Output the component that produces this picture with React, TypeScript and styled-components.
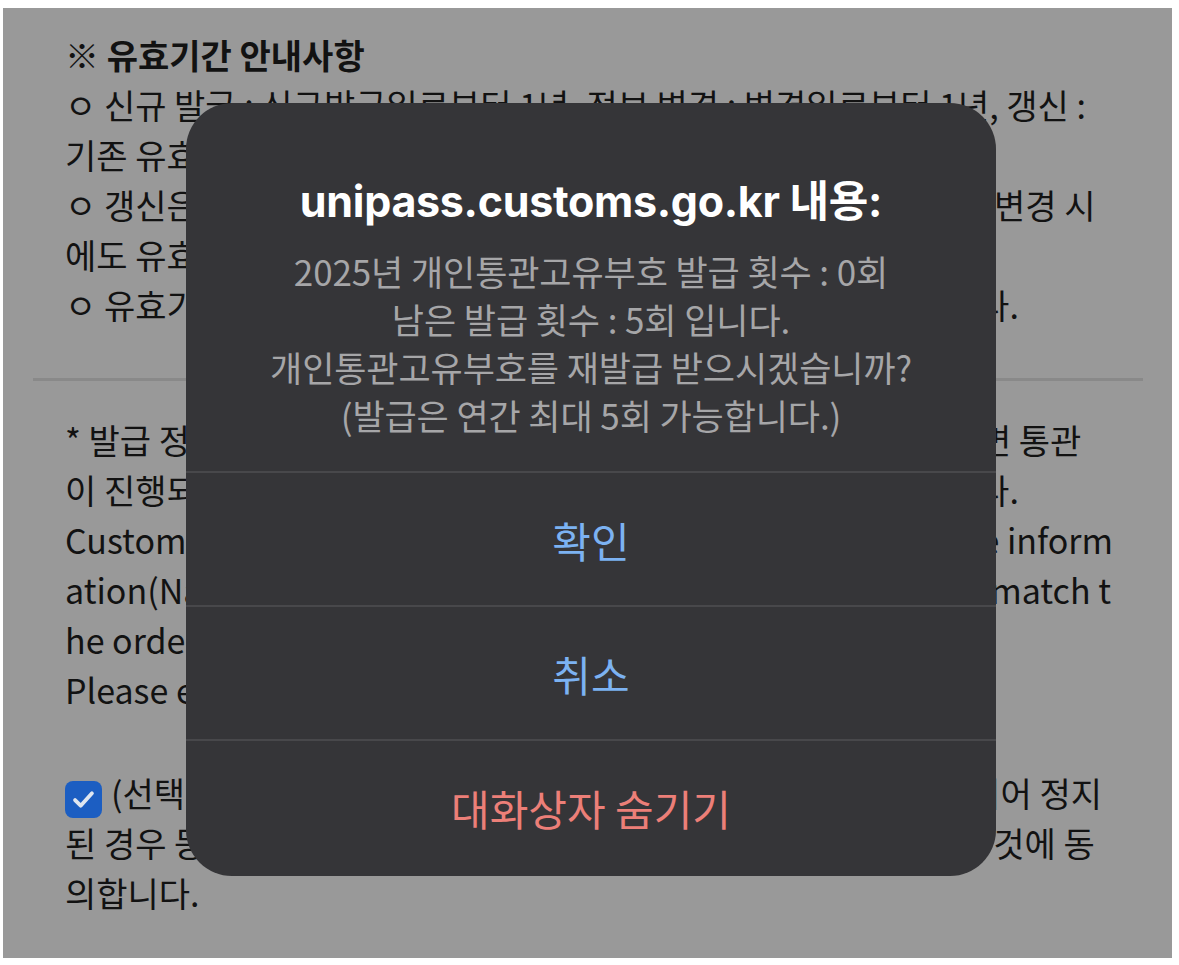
import React from 'react';
import styled, { createGlobalStyle } from 'styled-components';

const GlobalStyle = createGlobalStyle`
  html, body {
    margin: 0;
    padding: 0;
    background: #ffffff;
  }
  body {
    font-family: "Noto Sans CJK KR", "Noto Sans", sans-serif;
  }
`;

// Scanned page area behind the alert
const Sheet = styled.div`
  position: relative;
  box-sizing: border-box;
  width: 1169px;
  height: 950px;
  margin: 8px 0 0 3px;
  background: #999999;
  overflow: hidden;
  padding: 22px 40px 0 62px;
  color: #121212;
`;

const Section = styled.div`
  font-size: 34px;
  line-height: 50px;
`;

const Line = styled.div<{ $bold?: boolean }>`
  white-space: nowrap;
  font-weight: ${({ $bold }) => ($bold ? 700 : 400)};
`;

const Divider = styled.hr`
  border: none;
  height: 3px;
  background: #898989;
  margin: 48px 0 34px -32px;
  width: 1110px;
`;

const Spacer = styled.div`
  height: 53px;
`;

const CheckBox = styled.span`
  display: inline-flex;
  align-items: center;
  justify-content: center;
  width: 37px;
  height: 37px;
  border-radius: 8px;
  background: #1c5ec2;
  vertical-align: -6px;
  margin-right: 9px;
`;

// iOS style alert on top of the page
const Alert = styled.div`
  position: absolute;
  left: 183px;
  top: 95px;
  width: 810px;
  height: 773px;
  background: #353538;
  border-radius: 46px;
  display: flex;
  flex-direction: column;
  overflow: hidden;
`;

const AlertBody = styled.div`
  height: 370px;
  box-sizing: border-box;
  padding-top: 72px;
  text-align: center;
  border-bottom: 2px solid #48484b;
`;

const AlertTitle = styled.div`
  font-family: Inter, "Noto Sans CJK KR", sans-serif;
  font-weight: 700;
  font-size: 43px;
  line-height: 52px;
  color: #ffffff;
  letter-spacing: -0.3px;
  margin-bottom: 20px;
`;

const AlertMessage = styled.div`
  font-size: 35px;
  line-height: 48px;
  color: #a6a6a8;
  letter-spacing: -0.1px;
`;

const AlertButton = styled.button<{ $tone: 'blue' | 'red'; $last?: boolean }>`
  height: ${({ $last }) => ($last ? 133 : 134)}px;
  border: none;
  border-bottom: ${({ $last }) => ($last ? 'none' : '2px solid #48484b')};
  background: transparent;
  font-family: "Noto Sans CJK KR", sans-serif;
  font-size: 42px;
  color: ${({ $tone }) => ($tone === 'blue' ? '#7cb2f2' : '#ec7f78')};
  padding: 0;
  cursor: pointer;
`;

const CheckIcon = () => (
  <svg width="27" height="27" viewBox="0 0 24 24" fill="none">
    <path d="M4.5 12.5l5 5L19.5 6.5" stroke="#dfe6f0" strokeWidth="3.4" strokeLinecap="round" strokeLinejoin="round" />
  </svg>
);

export default function App() {
  return (
    <>
      <GlobalStyle />
      <Sheet>
        <Section>
          <Line $bold>※ 유효기간 안내사항</Line>
          <Line>ㅇ 신규 발급 : 신규발급일로부터 1년, 정보 변경 : 변경일로부터 1년, 갱신 :</Line>
          <Line>기존 유효기간 만료일로부터 1년</Line>
          <Line>ㅇ 갱신은 유효기간 만료일 기준 30일 이전부터 신청가능하며, 정보 변경 시</Line>
          <Line>에도 유효기간이 변경일로부터 1년으로 연장됩니다.</Line>
          <Line>ㅇ 유효기간이 지난 부호는 사용할 수 없으므로 재발급 받아야 합니다.</Line>
        </Section>
        <Divider />
        <Section>
          <Line>* 발급 정보(성명, 휴대전화번호)가 주문자의 정보와 일치하지 않으면 통관</Line>
          <Line>이 진행되지 않을 수 있으므로 정확한 정보를 입력해 주시기 바랍니다.</Line>
          <Line>Customs clearance can be delayed or denied if the issuance inform</Line>
          <Line>ation(Name, Mobile phone numbers) of this code does not match t</Line>
          <Line>he order information.</Line>
          <Line>Please enter the correct information.</Line>
          <Spacer />
          <Line>
            <CheckBox>
              <CheckIcon />
            </CheckBox>
            (선택) 개인통관고유부호가 도용 신고 등의 사유로 사용이 제한되어 정지
          </Line>
          <Line>된 경우 등록된 휴대전화 번호로 사용 정지 안내 문자 등을 수신하는 것에 동</Line>
          <Line>의합니다.</Line>
        </Section>

        <Alert>
          <AlertBody>
            <AlertTitle>unipass.customs.go.kr 내용:</AlertTitle>
            <AlertMessage>
              2025년 개인통관고유부호 발급 횟수 : 0회
              <br />
              남은 발급 횟수 : 5회 입니다.
              <br />
              개인통관고유부호를 재발급 받으시겠습니까?
              <br />
              (발급은 연간 최대 5회 가능합니다.)
            </AlertMessage>
          </AlertBody>
          <AlertButton $tone="blue">확인</AlertButton>
          <AlertButton $tone="blue">취소</AlertButton>
          <AlertButton $tone="red" $last>
            대화상자 숨기기
          </AlertButton>
        </Alert>
      </Sheet>
    </>
  );
}
